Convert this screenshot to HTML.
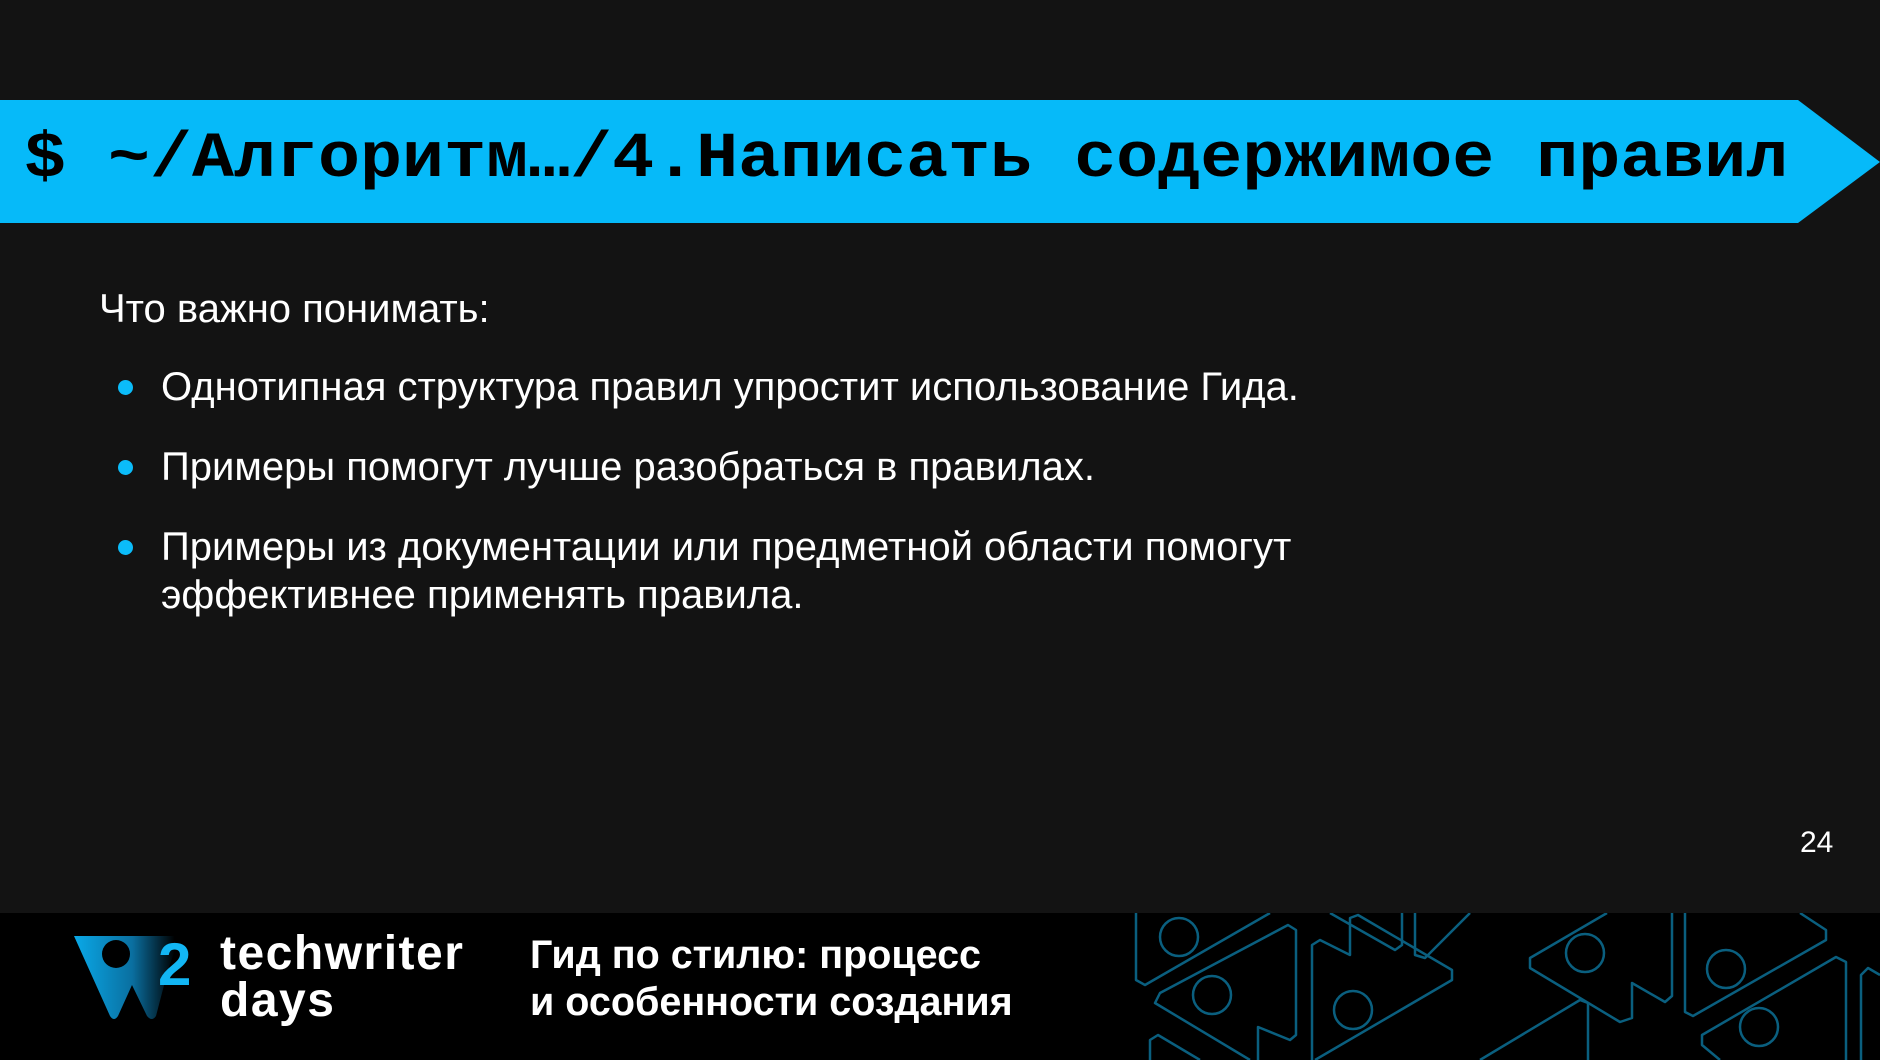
<!DOCTYPE html>
<html><head><meta charset="utf-8"><style>
html,body{margin:0;padding:0}
body{width:1880px;height:1060px;background:#131313;position:relative;overflow:hidden;font-family:"Liberation Sans",sans-serif;color:#fff}
.t{position:absolute;white-space:nowrap}
.b{position:absolute;font-size:40px;line-height:48px;left:161px;white-space:nowrap}
.dot{position:absolute;left:118px;width:15px;height:15px;border-radius:50%;background:#0bbcf9}
</style></head><body>
<svg style="position:absolute;left:0;top:0" width="1880" height="230"><polygon points="0,100 1798,100 1880,162 1798,223 0,223" fill="#06baf9"/></svg>
<div class="t" style="left:24px;top:119px;font-family:'Liberation Mono',monospace;font-weight:bold;font-size:70px;line-height:80px;color:#000;transform:scaleY(0.92);transform-origin:0 70%">$ ~/Алгоритм…/4.Написать содержимое правил</div>
<div class="t" style="left:99px;top:285px;font-size:40px;line-height:48px">Что важно понимать:</div>
<div class="dot" style="top:380px"></div><div class="b" style="top:363px">Однотипная структура правил упростит использование Гида.</div>
<div class="dot" style="top:460px"></div><div class="b" style="top:443px">Примеры помогут лучше разобраться в правилах.</div>
<div class="dot" style="top:540px"></div><div class="b" style="top:523px">Примеры из документации или предметной области помогут<br>эффективнее применять правила.</div>
<div class="t" style="left:1800px;top:825px;font-size:30px;line-height:36px">24</div>
<div style="position:absolute;left:0;top:913px;width:1880px;height:147px;background:#000"></div>
<svg style="position:absolute;left:0;top:913px" width="1880" height="147" fill="none" stroke="#0a5f7f" stroke-width="2.5" stroke-linejoin="round">
<g transform="translate(0,-913)">
<polyline points="1136,913 1136,980 1145,985 1270,913"/>
<circle cx="1179" cy="937" r="19"/>
<polyline points="1250,1060 1155,1003 1160,993 1288,925 1296,930 1296,1035 1290,1040 1258,1027 1258,1060"/>
<circle cx="1212" cy="995" r="19"/>
<polyline points="1150,1060 1150,1040 1158,1035 1200,1060"/>
<polyline points="1312,1060 1312,945 1320,940 1350,955 1350,918 1358,915 1452,970 1452,980 1315,1060"/>
<circle cx="1353" cy="1010" r="19"/>
<polyline points="1330,913 1395,950 1402,945 1402,913"/>
<polyline points="1415,913 1415,955 1425,958 1470,913"/>
<polyline points="1480,1060 1580,1000 1588,1003 1588,1060"/>
<polyline points="1607,913 1530,958 1530,968 1620,1022 1632,1018 1632,983 1665,1002 1672,996 1672,913"/>
<circle cx="1585" cy="953" r="19"/>
<polyline points="1685,913 1685,1012 1693,1016 1826,940 1826,930 1800,913"/>
<circle cx="1726" cy="969" r="19"/>
<polyline points="1720,1060 1702,1045 1702,1035 1836,957 1846,962 1846,1060"/>
<circle cx="1759" cy="1027" r="19"/>
<polyline points="1861,1060 1861,975 1868,968 1880,975"/>
</g></svg>
<svg style="position:absolute;left:70px;top:930px" width="130" height="95">
<defs><linearGradient id="g" x1="0" y1="0" x2="1" y2="0"><stop offset="0" stop-color="#0aa9e8"/><stop offset=".55" stop-color="#0a6fa0"/><stop offset=".95" stop-color="#000"/></linearGradient></defs>
<path d="M4,6 L110,6 L98,40 L86,86 Q82,92 77,86 L62,55 L48,86 Q44,92 40,86 Z" fill="url(#g)"/>
<circle cx="46" cy="24" r="14" fill="#000"/>
</svg>
<div class="t" style="left:158px;top:932px;font-size:60px;line-height:66px;font-weight:bold;color:#12b6f4">2</div>
<div class="t" style="left:220px;top:930px;font-size:48px;line-height:47px;font-weight:bold;letter-spacing:1.5px">techwriter<br>days</div>
<div class="t" style="left:530px;top:932px;font-size:39.5px;line-height:47px;font-weight:bold">Гид по стилю: процесс<br>и особенности создания</div>
</body></html>
